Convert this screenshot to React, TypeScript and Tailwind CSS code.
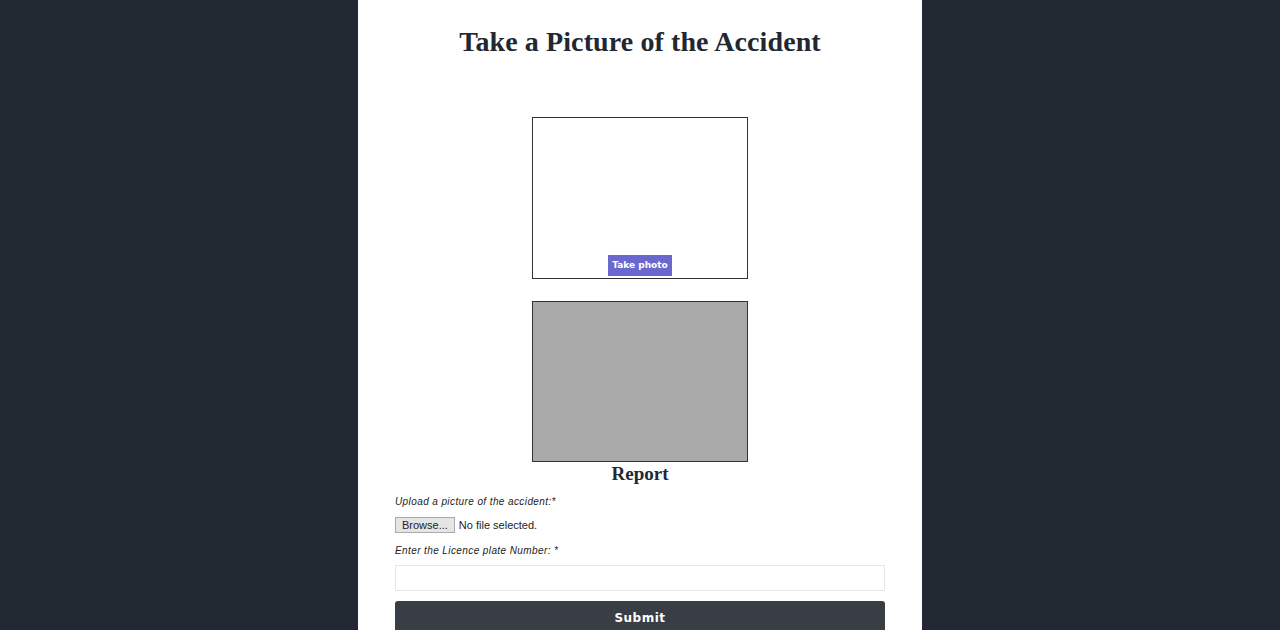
import React from "react";

const App = () => {
    return (
        <div className="min-h-screen bg-[#222831] flex justify-center">
            <div className="w-[564px] bg-white flex flex-col items-center pt-[24px] pb-6">
                <h1 className="text-[28px] leading-[36px] font-bold text-[#222831] font-['Liberation_Serif',serif] tracking-[0.1px]">
                    Take a Picture of the Accident
                </h1>

                <div className="mt-[57px] w-[216px] h-[162px] border border-[#333] flex items-end justify-center pb-[2px]">
                    <button className="bg-[#6a67ce] text-white text-[9px] font-bold font-['DejaVu_Sans',sans-serif] px-[4px] h-[21px]">
                        Take photo
                    </button>
                </div>

                <div className="mt-[22px] w-[216px] h-[161px] border border-[#333] bg-[#aaaaaa]" />

                <h2 className="text-[19px] leading-[24px] font-bold text-[#222831] font-['Liberation_Serif',serif]">
                    Report
                </h2>

                <form className="w-[490px] mt-[8px] flex flex-col font-['Liberation_Sans',sans-serif]">
                    <label className="text-[10px] italic text-[#222] tracking-[0.4px]">
                        Upload a picture of the accident:*
                    </label>
                    <div className="mt-[8px] flex items-center gap-[4px] text-[11px] text-[#222] font-['Liberation_Sans',sans-serif]">
                        <span className="bg-[#e5e5e5] border border-[#aaa] px-[6px] h-[16px] leading-[14px]">
                            Browse...
                        </span>
                        <span>No file selected.</span>
                    </div>
                    <label className="mt-[9px] text-[10px] italic text-[#222] tracking-[0.4px]">
                        Enter the Licence plate Number: *
                    </label>
                    <input
                        type="text"
                        className="mt-[7px] h-[26px] border border-[#e6e6e6] outline-none"
                    />
                    <button className="mt-[10px] h-[34px] bg-[#393e46] rounded-t-[3px] text-white text-[12px] font-bold font-['DejaVu_Sans',sans-serif] tracking-[0.5px]">
                        Submit
                    </button>
                </form>
            </div>
        </div>
    );
};

export default App;
